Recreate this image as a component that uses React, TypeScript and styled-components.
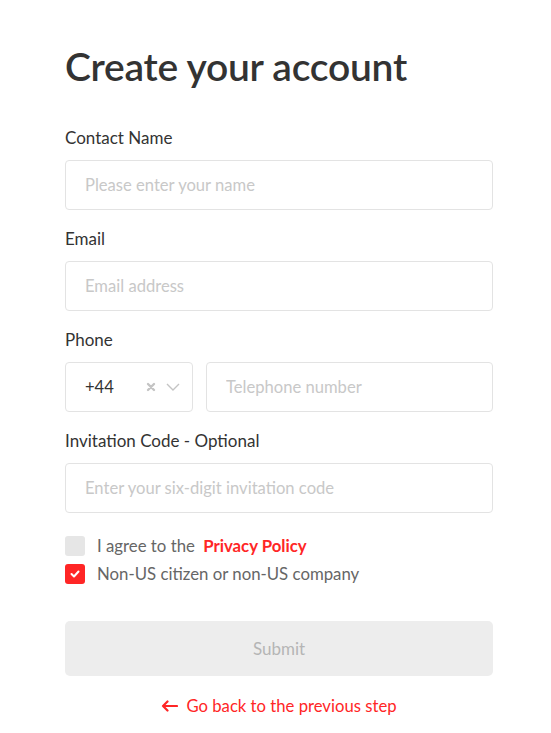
import React, { useState } from "react";
import styled, { createGlobalStyle } from "styled-components";

const Global = createGlobalStyle`
  html, body { margin: 0; padding: 0; background: #fff; }
  body { font-family: Lato, "Open Sans", sans-serif; color: #333; }
  * { box-sizing: border-box; }
`;

const Page = styled.div`
  width: 551px;
  padding: 42px 58px 0 65px;
  display: flex;
  flex-direction: column;
`;

const Title = styled.h1`
  margin: 0 0 36px;
  font-size: 39px;
  line-height: 48px;
  font-weight: 600;
  color: #333;
  letter-spacing: -0.25px;
`;

const Field = styled.div`
  display: flex;
  flex-direction: column;
  margin-bottom: 17px;
`;

const Label = styled.label`
  font-size: 17px;
  line-height: 24px;
  color: #333;
  margin-bottom: 10px;
`;

const Input = styled.input`
  height: 50px;
  width: 100%;
  border: 1px solid #e3e3e3;
  border-radius: 4px;
  padding: 0 19px;
  font-family: inherit;
  font-size: 16.6px;
  color: #333;
  outline: none;
  &::placeholder { color: #c8c8c8; }
`;

const PhoneRow = styled.div`
  display: flex;
  gap: 13px;
`;

const CodeSelect = styled.div`
  width: 128px;
  flex: none;
  height: 50px;
  border: 1px solid #e3e3e3;
  border-radius: 4px;
  display: flex;
  align-items: center;
  padding: 0 12px 0 19px;
  font-size: 16.6px;
  color: #333;
`;

const CodeText = styled.span`
  flex: 1;
`;

const IconBox = styled.span`
  display: flex;
  align-items: center;
  margin-left: 10px;
`;

const Checks = styled.div`
  display: flex;
  flex-direction: column;
  gap: 8px;
  margin-top: 6px;
`;

const CheckRow = styled.label`
  display: flex;
  align-items: center;
  gap: 12px;
  font-size: 16.8px;
  line-height: 20px;
  color: #666;
  cursor: pointer;
`;

const Box = styled.span<{ $on: boolean }>`
  width: 20px;
  height: 20px;
  border-radius: 3px;
  background: ${(p) => (p.$on ? "#ff2626" : "#e6e6e6")};
  display: flex;
  align-items: center;
  justify-content: center;
  flex: none;
`;

const Link = styled.a`
  color: #ff2626;
  font-weight: 700;
  text-decoration: none;
  margin-left: 4px;
`;

const Submit = styled.button`
  margin-top: 37px;
  height: 55px;
  width: 100%;
  border: none;
  border-radius: 5px;
  background: #ededed;
  color: #b5b5b5;
  font-family: inherit;
  font-size: 17px;
`;

const Back = styled.a`
  margin-top: 18px;
  display: flex;
  align-items: center;
  justify-content: center;
  gap: 8px;
  color: #ff2626;
  font-size: 16.7px;
  line-height: 24px;
  text-decoration: none;
`;

export default function App() {
  const [agree, setAgree] = useState(false);
  const [nonUs, setNonUs] = useState(true);
  return (
    <>
      <Global />
      <Page>
        <Title>Create your account</Title>
        <Field>
          <Label>Contact Name</Label>
          <Input placeholder="Please enter your name" />
        </Field>
        <Field>
          <Label>Email</Label>
          <Input placeholder="Email address" />
        </Field>
        <Field>
          <Label>Phone</Label>
          <PhoneRow>
            <CodeSelect>
              <CodeText>+44</CodeText>
              <IconBox>
                <svg width="10" height="10" viewBox="0 0 10 10">
                  <path d="M2 2L8 8M8 2L2 8" stroke="#c4c4c4" strokeWidth="2.4" strokeLinecap="round" />
                </svg>
              </IconBox>
              <IconBox>
                <svg width="14" height="8" viewBox="0 0 14 8">
                  <path d="M1 1L7 7L13 1" stroke="#c4c4c4" strokeWidth="1.4" fill="none" />
                </svg>
              </IconBox>
            </CodeSelect>
            <Input placeholder="Telephone number" />
          </PhoneRow>
        </Field>
        <Field>
          <Label>Invitation Code - Optional</Label>
          <Input placeholder="Enter your six-digit invitation code" />
        </Field>
        <Checks>
          <CheckRow onClick={() => setAgree(!agree)}>
            <Box $on={agree}>
              {agree && (
                <svg width="10" height="8" viewBox="0 0 10 8">
                  <path d="M1.5 4L4 6.5L8.5 1.5" stroke="#fff" strokeWidth="2" fill="none" strokeLinecap="round" strokeLinejoin="round" />
                </svg>
              )}
            </Box>
            <span>
              I agree to the <Link href="#">Privacy Policy</Link>
            </span>
          </CheckRow>
          <CheckRow onClick={() => setNonUs(!nonUs)}>
            <Box $on={nonUs}>
              {nonUs && (
                <svg width="10" height="8" viewBox="0 0 10 8">
                  <path d="M1.5 4L4 6.5L8.5 1.5" stroke="#fff" strokeWidth="2" fill="none" strokeLinecap="round" strokeLinejoin="round" />
                </svg>
              )}
            </Box>
            <span>Non-US citizen or non-US company</span>
          </CheckRow>
        </Checks>
        <Submit>Submit</Submit>
        <Back href="#">
          <svg width="17" height="12" viewBox="0 0 17 12">
            <path d="M16 6H2M6.5 1.5L2 6L6.5 10.5" stroke="#ff2626" strokeWidth="2.2" fill="none" strokeLinecap="round" strokeLinejoin="round" />
          </svg>
          Go back to the previous step
        </Back>
      </Page>
    </>
  );
}
